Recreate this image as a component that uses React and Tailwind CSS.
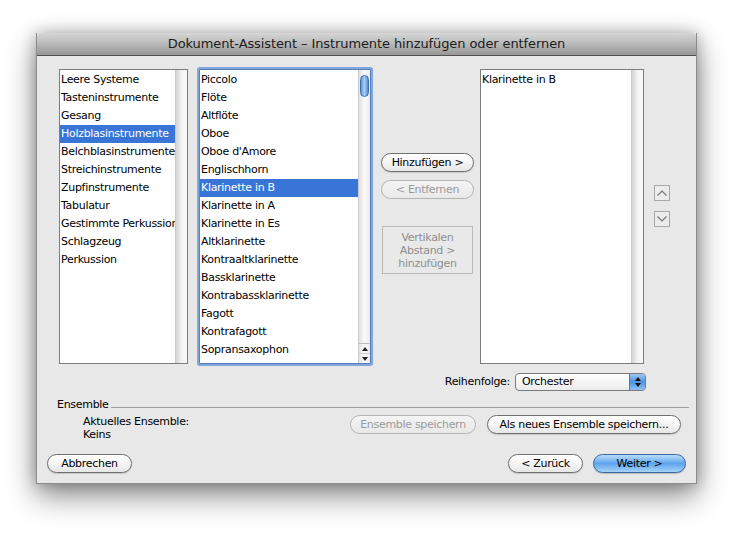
import React from 'react'

const font = { fontFamily: '"DejaVu Sans", "Lucida Grande", sans-serif' }

const families = [
  'Leere Systeme',
  'Tasteninstrumente',
  'Gesang',
  'Holzblasinstrumente',
  'Belchblasinstrumente',
  'Streichinstrumente',
  'Zupfinstrumente',
  'Tabulatur',
  'Gestimmte Perkussion',
  'Schlagzeug',
  'Perkussion',
]

const instruments = [
  'Piccolo',
  'Flöte',
  'Altflöte',
  'Oboe',
  "Oboe d'Amore",
  'Englischhorn',
  'Klarinette in B',
  'Klarinette in A',
  'Klarinette in Es',
  'Altklarinette',
  'Kontraaltklarinette',
  'Bassklarinette',
  'Kontrabassklarinette',
  'Fagott',
  'Kontrafagott',
  'Sopransaxophon',
  'Altsaxophon',
]

function Row({ label, selected }) {
  return (
    <div
      className={
        'h-[18px] leading-[18px] pl-[1px] whitespace-nowrap overflow-hidden ' +
        (selected ? 'bg-[#3875d7] text-white' : 'text-black')
      }
    >
      {label}
    </div>
  )
}

function EmptyTrack() {
  return (
    <div className="w-[12px] shrink-0 h-full bg-gradient-to-r from-[#d4d4d4] via-[#f2f2f2] to-[#fafafa] border-l border-[#c8c8c8]" />
  )
}

function AquaButton({ children, disabled, className = '' }) {
  return (
    <button
      className={
        'h-[19px] rounded-full border text-[11px] leading-none flex items-center justify-center whitespace-nowrap ' +
        (disabled
          ? 'border-[#b4b4b4] text-[#9a9a9a] bg-gradient-to-b from-[#f4f4f4] to-[#e9e9e9] '
          : 'border-[#6f6f6f] text-black bg-gradient-to-b from-white via-[#f5f5f5] to-[#e6e6e6] shadow-[0_1px_1px_rgba(0,0,0,0.15)] ') +
        className
      }
    >
      {children}
    </button>
  )
}

function SmallArrowBtn({ up }) {
  return (
    <div className="w-[16px] h-[16px] border border-[#a8a8a8] bg-[#ececec] flex items-center justify-center">
      <svg width="12" height="8" viewBox="0 0 12 8">
        <path
          d={up ? 'M1.5 6.5 L6 2 L10.5 6.5' : 'M1.5 1.5 L6 6 L10.5 1.5'}
          fill="none"
          stroke="#777"
          strokeWidth="1.2"
        />
      </svg>
    </div>
  )
}

export default function App() {
  return (
    <div className="w-[747px] h-[536px] bg-white overflow-hidden" style={font}>
      <div className="pl-[36px] pt-[33px]">
        <div className="w-[661px] h-[451px] bg-[#e8e8e8] border-x border-b border-[#8c8c8c] shadow-[0_12px_28px_rgba(0,0,0,0.45),0_0_14px_rgba(0,0,0,0.25)] flex flex-col text-[11px] tracking-[-0.3px]">
          {/* title bar */}
          <div className="h-[23px] shrink-0 bg-gradient-to-b from-[#d6d6d6] via-[#b8b8b8] to-[#979797] border-b border-[#515151] rounded-t-[4px] flex items-center justify-center text-[13px] tracking-[-0.1px] text-[#1c1c1c]">
            Dokument-Assistent – Instrumente hinzufügen oder entfernen
          </div>

          {/* main row */}
          <div className="flex items-start pt-[13px] pl-[22px]">
            {/* list 1 */}
            <div className="w-[129px] h-[295px] border border-[#7d7d7d] bg-white flex">
              <div className="flex-1 overflow-hidden pt-[1px]">
                {families.map((f) => (
                  <Row key={f} label={f} selected={f === 'Holzblasinstrumente'} />
                ))}
              </div>
              <EmptyTrack />
            </div>

            {/* list 2 */}
            <div className="ml-[11px] w-[172px] h-[295px] border border-[#5a7fb8] bg-white flex shadow-[0_0_0_2px_#7ea7dd] rounded-[1px]">
              <div className="flex-1 overflow-hidden pt-[1px]">
                {instruments.map((f) => (
                  <Row key={f} label={f} selected={f === 'Klarinette in B'} />
                ))}
              </div>
              <div className="w-[12px] shrink-0 h-full flex flex-col border-l border-[#c9c9c9] bg-gradient-to-r from-[#e2e2e2] via-[#fbfbfb] to-[#ececec]">
                <div className="flex-1 pt-[5px] flex justify-center">
                  <div className="w-[9px] h-[22px] rounded-full border border-[#3d6fb4] bg-gradient-to-r from-[#5c97e0] via-[#a9cff5] to-[#4d89d8]" />
                </div>
                <div className="h-[10px] flex items-center justify-center border-t border-[#bdbdbd]">
                  <svg width="6" height="4" viewBox="0 0 6 4">
                    <path d="M3 0 L6 4 L0 4 Z" fill="#222" />
                  </svg>
                </div>
                <div className="h-[10px] flex items-center justify-center border-t border-[#d0d0d0]">
                  <svg width="6" height="4" viewBox="0 0 6 4">
                    <path d="M0 0 L6 0 L3 4 Z" fill="#222" />
                  </svg>
                </div>
              </div>
            </div>

            {/* middle buttons */}
            <div className="ml-[10px] w-[93px] flex flex-col pt-[84px]">
              <AquaButton className="w-[93px]">Hinzufügen &gt;</AquaButton>
              <AquaButton disabled className="w-[93px] mt-[8px]">
                &lt; Entfernen
              </AquaButton>
              <div className="mt-[27px] mx-[1px] h-[48px] border border-[#b9b9b9] bg-[#e9e9e9] text-[#8e8e8e] text-center leading-[13px] flex flex-col items-center justify-center">
                <span>Vertikalen</span>
                <span>Abstand &gt;</span>
                <span>hinzufügen</span>
              </div>
            </div>

            {/* list 3 */}
            <div className="ml-[6px] w-[164px] h-[295px] border border-[#7d7d7d] bg-white flex">
              <div className="flex-1 overflow-hidden pt-[1px]">
                <Row label="Klarinette in B" />
              </div>
              <EmptyTrack />
            </div>

            {/* up/down */}
            <div className="ml-[10px] pt-[116px] flex flex-col gap-[10px]">
              <SmallArrowBtn up />
              <SmallArrowBtn />
            </div>
          </div>

          {/* Reihenfolge */}
          <div className="flex items-center justify-end pr-[50px] mt-[9px]">
            <span className="mr-[5px]">Reihenfolge:</span>
            <div className="w-[131px] h-[18px] rounded-[4px] border border-[#7a7a7a] bg-gradient-to-b from-white to-[#ececec] flex items-center overflow-hidden">
              <span className="flex-1 pl-[6px]">Orchester</span>
              <div className="w-[16px] h-full bg-gradient-to-b from-[#9cc8f2] via-[#4f93e2] to-[#8cc0f2] border-l border-[#4a78b8] flex flex-col items-center justify-center gap-[2px]">
                <svg width="6" height="4" viewBox="0 0 6 4">
                  <path d="M3 0 L6 4 L0 4 Z" fill="#111" />
                </svg>
                <svg width="6" height="4" viewBox="0 0 6 4">
                  <path d="M0 0 L6 0 L3 4 Z" fill="#111" />
                </svg>
              </div>
            </div>
          </div>

          {/* Ensemble group */}
          <div className="flex items-center pl-[20px] pr-[7px] mt-[6px]">
            <span>Ensemble</span>
            <div className="flex-1 ml-[2px] mt-[5px] border-t border-[#9c9c9c]" />
          </div>
          <div className="flex items-start pl-[46px] pr-[15px] mt-[1px]">
            <div className="flex flex-col leading-[13px]">
              <span>Aktuelles Ensemble:</span>
              <span>Keins</span>
            </div>
            <div className="flex-1" />
            <div className="flex gap-[11px]">
              <AquaButton disabled className="w-[126px]">
                Ensemble speichern
              </AquaButton>
              <AquaButton className="w-[194px]">Als neues Ensemble speichern...</AquaButton>
            </div>
          </div>

          {/* bottom buttons */}
          <div className="flex items-center pl-[10px] pr-[10px] mt-[13px]">
            <AquaButton className="w-[85px]">Abbrechen</AquaButton>
            <div className="flex-1" />
            <AquaButton className="w-[75px]">&lt; Zurück</AquaButton>
            <button className="ml-[10px] w-[93px] h-[19px] rounded-full border border-[#3b68a8] text-[11px] text-black leading-none flex items-center justify-center bg-gradient-to-b from-[#b9dcf9] via-[#5ea4ec] to-[#a6d3fa] shadow-[0_1px_1px_rgba(0,0,0,0.2)]">
              Weiter &gt;
            </button>
          </div>
        </div>
      </div>
    </div>
  )
}
